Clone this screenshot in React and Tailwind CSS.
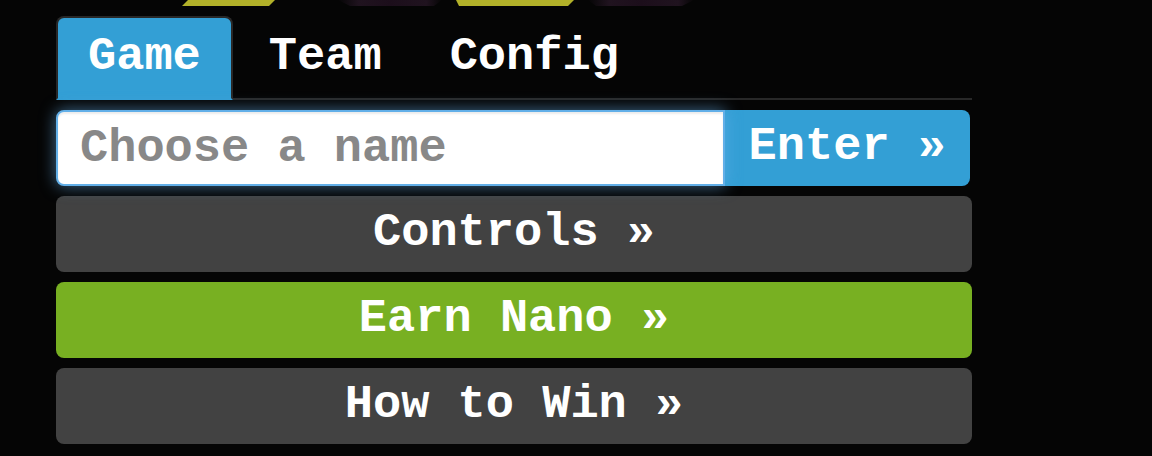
import React, { useState } from 'react';

const tabs = ['Game', 'Team', 'Config'];

const actions = [
  { key: 'controls', label: 'Controls »', color: 'bg-[#424242] hover:bg-[#4d4d4d]' },
  { key: 'earn', label: 'Earn Nano »', color: 'bg-[#78b022] hover:bg-[#84bf2a]' },
  { key: 'how', label: 'How to Win »', color: 'bg-[#424242] hover:bg-[#4d4d4d]' },
];

// Lower edge of the title lettering, cut off by the top of the view
function TitleEdge() {
  return (
    <svg width="700" height="6" viewBox="0 0 700 6" className="block h-1.5" aria-hidden="true">
      <defs>
        <linearGradient id="shade" x1="0" x2="1" y1="0" y2="0">
          <stop offset="0" stopColor="#20131f" stopOpacity="0" />
          <stop offset="0.2" stopColor="#20131f" />
          <stop offset="0.5" stopColor="#1c0e1b" />
          <stop offset="0.85" stopColor="#20131f" />
          <stop offset="1" stopColor="#20131f" stopOpacity="0" />
        </linearGradient>
      </defs>
      <path d="M188 0H275L269 6H182Z" fill="#b2b129" />
      <path d="M338 0H442L434 6H350Z" fill="url(#shade)" />
      <path d="M456 0H574L568 6H459Z" fill="#b2b129" />
      <path d="M588 0H694L682 6H596Z" fill="url(#shade)" />
    </svg>
  );
}

function Tabs({ active, onSelect }) {
  return (
    <div role="tablist" className="flex gap-1 border-b-2 border-[#282828]">
      {tabs.map((tab) => (
        <button
          key={tab}
          role="tab"
          aria-selected={tab === active}
          onClick={() => onSelect(tab)}
          className={
            tab === active
              ? '-mb-0.5 h-[84px] rounded-t-lg border-2 border-[#282828] border-b-[#339fd5] bg-[#339fd5] px-[30px] pb-1'
              : '-mb-0.5 h-[84px] rounded-t-lg border-2 border-transparent px-[30px] pb-1'
          }
        >
          {tab}
        </button>
      ))}
    </div>
  );
}

export default function App() {
  const [active, setActive] = useState('Game');
  const [name, setName] = useState('');

  return (
    <div className="min-h-screen bg-[#050505] font-['Liberation_Mono',monospace] text-[47px] leading-none font-bold text-white">
      <TitleEdge />

      <main className="flex flex-col gap-2.5 pt-2.5 pr-[180px] pb-3 pl-14">
        <Tabs active={active} onSelect={setActive} />

        {/* Name entry */}
        <form className="flex pr-0.5" onSubmit={(e) => e.preventDefault()}>
          <input
            type="text"
            aria-label="Choose a name"
            placeholder="Choose a name"
            value={name}
            onChange={(e) => setName(e.target.value)}
            className="relative h-[76px] min-w-0 flex-1 rounded-l-lg border-2 border-[#62afe8] bg-white px-[22px] text-[#333] shadow-[inset_0_2px_2px_rgba(0,0,0,0.075),0_0_16px_rgba(102,175,233,0.6)] outline-none placeholder:text-[#888]"
          />
          <button type="submit" className="h-[76px] rounded-r-lg bg-[#339fd5] px-6 pb-1 whitespace-nowrap">
            Enter »
          </button>
        </form>

        {actions.map((action) => (
          <button key={action.key} className={`h-[76px] w-full rounded-lg pb-1 ${action.color}`}>
            {action.label}
          </button>
        ))}
      </main>
    </div>
  );
}
